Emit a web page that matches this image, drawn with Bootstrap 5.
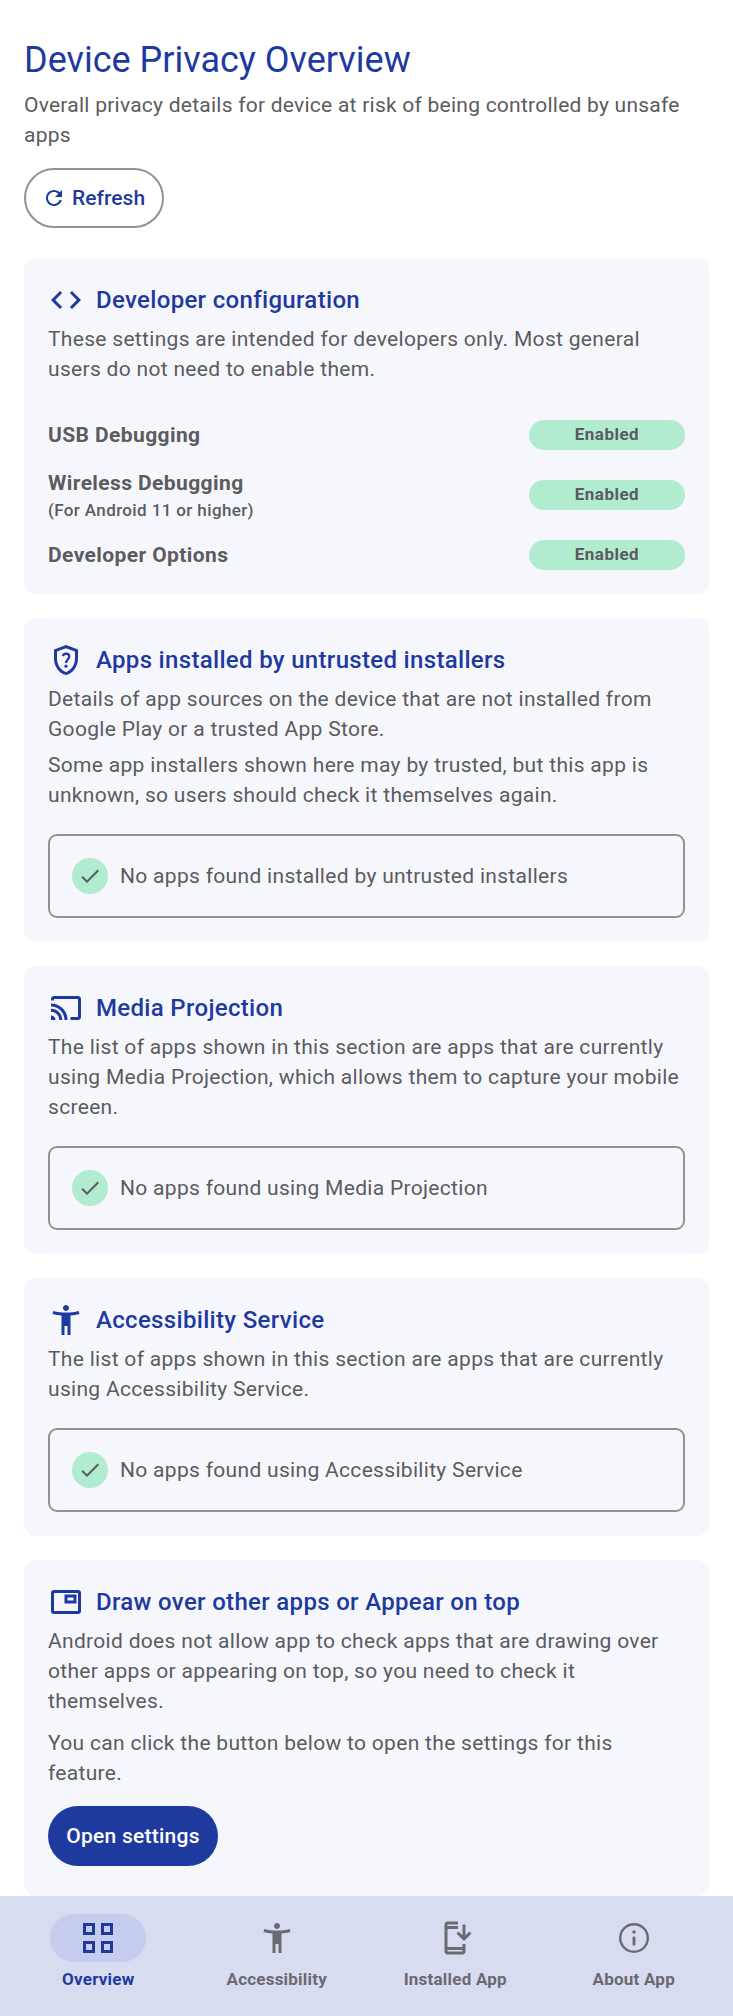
<!DOCTYPE html>
<html lang="en">
<head>
<meta charset="utf-8">
<meta name="viewport" content="width=device-width, initial-scale=1">
<title>Device Privacy Overview</title>
<link href="https://cdn.jsdelivr.net/npm/bootstrap@5.3.0/dist/css/bootstrap.min.css" rel="stylesheet">
<style>
  :root { --blue: #1f3a9f; --ink: #5b5b60; --line: #919299; --mint: #b1ebd0; }
  body { font-family: Roboto, sans-serif; font-size: 21px; line-height: 30px; letter-spacing: .31px; color: var(--ink); background: #fff; }
  p { margin: 0; }
  svg { display: block; flex: none; fill: currentColor; }
  .page-body { height: 1896px; padding: 36px 24px 0; }
  .page-title { font-size: 36px; line-height: 48px; font-weight: 400; letter-spacing: 0; color: var(--blue); margin: 0 0 6px; }
  .lede { letter-spacing: .245px; }
  .btn-pill { height: 60px; border-radius: 30px; font-size: 21px; line-height: 30px; font-weight: 500; padding: 0 16px; }
  .btn-refresh { width: 140px; margin: 18px 0 30px; border: 2px solid var(--line); color: var(--blue); gap: 6px; letter-spacing: .05px; }
  .btn-settings { width: 170px; margin-top: 18px; background: var(--blue); color: #fff; letter-spacing: .25px; padding: 0; }
  .panel { background: #f6f7fc; border: 0; border-radius: 12px; padding: 24px; margin-bottom: 24px; }
  .panel-head { gap: 12px; height: 36px; margin-bottom: 6px; color: var(--blue); }
  .panel-head h2 { font-size: 24px; line-height: 36px; font-weight: 500; letter-spacing: .32px; margin: 0; }
  .icon-lg { width: 36px; height: 36px; }
  .icon-md { width: 24px; height: 24px; }
  .settings-rows { margin-top: 36px; gap: 18px; font-weight: 700; letter-spacing: .4px; }
  .row-note { font-size: 17px; line-height: 24px; font-weight: 500; letter-spacing: .38px; }
  .state-pill { width: 156px; height: 30px; background: var(--mint); color: var(--ink); font-size: 17px; line-height: 29px; font-weight: 700; letter-spacing: .48px; padding: 0; }
  .result-box { height: 84px; margin-top: 24px; border: 2px solid var(--line); border-radius: 9px; padding: 0 22px; gap: 12px; }
  .check-dot { width: 36px; height: 36px; background: var(--mint); }
  .bottom-nav { height: 120px; background: #d7dcf0; padding: 18px 10px 0 9px; color: #6b6a73; }
  .bottom-nav .nav-link { padding: 0; color: inherit; font-size: 17px; line-height: 24px; font-weight: 700; letter-spacing: .22px; }
  .bottom-nav .nav-link.active { color: var(--blue); }
  .nav-icon { width: 96px; height: 48px; margin-bottom: 5px; }
  .active .nav-icon { background: #c6ccee; }
</style>
</head>
<body>
<svg class="d-none" aria-hidden="true">
  <symbol id="i-check" viewBox="0 0 24 24"><path d="M9 16.17 4.83 12l-1.42 1.41L9 19 21 7l-1.41-1.41z"/></symbol>
  <symbol id="i-person" viewBox="0 0 24 24"><path d="M20.5 6c-2.61.7-5.67 1-8.5 1s-5.89-.3-8.5-1L3 8c1.86.5 4 .83 6 1v13h2v-6h2v6h2V9c2-.17 4.14-.5 6-1zM12 6c1.1 0 2-.9 2-2s-.9-2-2-2-2 .9-2 2 .9 2 2 2z"/></symbol>
</svg>

<main class="page-body">
  <h1 class="page-title">Device Privacy Overview</h1>
  <p class="lede">Overall privacy details for device at risk of being controlled by unsafe apps</p>
  <button type="button" class="btn btn-pill btn-refresh d-flex align-items-center">
    <svg class="icon-md" viewBox="0 0 24 24"><path d="M17.65 6.35C16.2 4.9 14.21 4 12 4c-4.42 0-7.99 3.58-7.99 8s3.57 8 7.99 8c3.73 0 6.84-2.55 7.73-6h-2.08c-.82 2.33-3.04 4-5.65 4-3.31 0-6-2.69-6-6s2.69-6 6-6c1.66 0 3.14.69 4.22 1.78L13 11h7V4z"/></svg>
    Refresh
  </button>

  <section class="card panel">
    <div class="panel-head d-flex align-items-center">
      <svg class="icon-lg" viewBox="0 0 24 24"><path d="M9.4 16.6 4.8 12l4.6-4.6L8 6l-6 6 6 6zm5.2 0 4.6-4.6-4.6-4.6L16 6l6 6-6 6z"/></svg>
      <h2>Developer configuration</h2>
    </div>
    <p>These settings are intended for developers only. Most general<br>users do not need to enable them.</p>
    <div class="settings-rows d-flex flex-column">
      <div class="d-flex align-items-center justify-content-between">
        <span>USB Debugging</span><span class="badge rounded-pill state-pill">Enabled</span>
      </div>
      <div class="d-flex align-items-center justify-content-between">
        <div>Wireless Debugging<div class="row-note">(For Android 11 or higher)</div></div><span class="badge rounded-pill state-pill">Enabled</span>
      </div>
      <div class="d-flex align-items-center justify-content-between">
        <span>Developer Options</span><span class="badge rounded-pill state-pill">Enabled</span>
      </div>
    </div>
  </section>

  <section class="card panel">
    <div class="panel-head d-flex align-items-center">
      <svg class="icon-lg" viewBox="0 0 24 24"><path d="M12 2 4 5v6.09c0 5.05 3.41 9.76 8 10.91 4.59-1.15 8-5.86 8-10.91V5zm6 9.09c0 4-2.55 7.7-6 8.83-3.45-1.13-6-4.82-6-8.83v-4.7l6-2.25 6 2.25z"/><path d="M9.9 9.4C10.2 8.3 11 7.7 12 7.7c1.3 0 2.2.8 2.2 2 0 1.9-2.2 2.1-2.2 4.3" fill="none" stroke="currentColor" stroke-width="1.5"/><circle cx="12" cy="16.1" r="1.05"/></svg>
      <h2>Apps installed by untrusted installers</h2>
    </div>
    <p>Details of app sources on the device that are not installed from<br>Google Play or a trusted App Store.</p>
    <p style="margin-top:6px">Some app installers shown here may by trusted, but this app is<br>unknown, so users should check it themselves again.</p>
    <div class="result-box d-flex align-items-center">
      <span class="check-dot rounded-circle d-flex align-items-center justify-content-center"><svg class="icon-md"><use href="#i-check"/></svg></span>
      <span>No apps found installed by untrusted installers</span>
    </div>
  </section>

  <section class="card panel">
    <div class="panel-head d-flex align-items-center">
      <svg class="icon-lg" viewBox="0 0 24 24"><path d="M15 20h5c1.1 0 2-.9 2-2V6c0-1.100-.9-2-2-2H4c-1.100 0-2 .9-2 2v1h2V6h16v12h-5zM2 17v3h3a3 3 0 0 0-3-3z"/><path d="M2 13.500A6.500 6.500 0 0 1 8.500 20M2 10a10 10 0 0 1 10 10" fill="none" stroke="currentColor" stroke-width="2"/></svg>
      <h2>Media Projection</h2>
    </div>
    <p>The list of apps shown in this section are apps that are currently<br>using Media Projection, which allows them to capture your mobile<br>screen.</p>
    <div class="result-box d-flex align-items-center">
      <span class="check-dot rounded-circle d-flex align-items-center justify-content-center"><svg class="icon-md"><use href="#i-check"/></svg></span>
      <span>No apps found using Media Projection</span>
    </div>
  </section>

  <section class="card panel">
    <div class="panel-head d-flex align-items-center">
      <svg class="icon-lg"><use href="#i-person"/></svg>
      <h2>Accessibility Service</h2>
    </div>
    <p>The list of apps shown in this section are apps that are currently<br>using Accessibility Service.</p>
    <div class="result-box d-flex align-items-center">
      <span class="check-dot rounded-circle d-flex align-items-center justify-content-center"><svg class="icon-md"><use href="#i-check"/></svg></span>
      <span>No apps found using Accessibility Service</span>
    </div>
  </section>

  <section class="card panel mb-0" style="padding-bottom:30px">
    <div class="panel-head d-flex align-items-center">
      <svg class="icon-lg" viewBox="0 0 24 24"><g fill="none" stroke="currentColor" stroke-width="2"><rect x="3" y="5" width="18" height="14" rx="1"/><path d="M12 8h6v4h-6z"/></g></svg>
      <h2>Draw over other apps or Appear on top</h2>
    </div>
    <p>Android does not allow app to check apps that are drawing over<br>other apps or appearing on top, so you need to check it<br>themselves.</p>
    <p style="margin-top:12px">You can click the button below to open the settings for this<br>feature.</p>
    <button type="button" class="btn btn-pill btn-settings">Open settings</button>
  </section>
</main>

<nav class="bottom-nav">
  <div class="nav nav-fill flex-nowrap">
    <a class="nav-link nav-item active w-25 d-flex flex-column align-items-center" href="#">
      <span class="nav-icon rounded-pill d-flex align-items-center justify-content-center"><svg class="icon-lg" viewBox="0 0 24 24"><path d="M3 3h6v6H3zM15 3h6v6h-6zM3 15h6v6H3zM15 15h6v6h-6z" fill="none" stroke="currentColor" stroke-width="2"/></svg></span>
      Overview
    </a>
    <a class="nav-link nav-item w-25 d-flex flex-column align-items-center" href="#">
      <span class="nav-icon d-flex align-items-center justify-content-center"><svg class="icon-lg"><use href="#i-person"/></svg></span>
      Accessibility
    </a>
    <a class="nav-link nav-item w-25 d-flex flex-column align-items-center" href="#">
      <span class="nav-icon d-flex align-items-center justify-content-center"><svg class="icon-lg" viewBox="0 0 24 24"><path fill-rule="evenodd" d="M17 18H7V6h7V1H7c-1.100 0-2 .9-2 2v18c0 1.100.9 2 2 2h10c1.100 0 2-.9 2-2v-5h-2zM7 3h7v1H7zM7 20h10v1H7z"/><path d="m18 14 5-5-1.410-1.410L19 10.170V3h-2v7.170l-2.590-2.580L13 9z"/></svg></span>
      Installed App
    </a>
    <a class="nav-link nav-item w-25 d-flex flex-column align-items-center" href="#">
      <span class="nav-icon d-flex align-items-center justify-content-center"><svg class="icon-lg" viewBox="0 0 24 24"><circle cx="12" cy="12" r="9.200" fill="none" stroke="currentColor" stroke-width="1.600"/><circle cx="12" cy="8" r="1.150"/><rect x="11.050" y="11" width="1.900" height="6.100" rx=".9"/></svg></span>
      About App
    </a>
  </div>
</nav>
<script src="https://cdn.jsdelivr.net/npm/bootstrap@5.3.0/dist/js/bootstrap.bundle.min.js"></script>
</body>
</html>
